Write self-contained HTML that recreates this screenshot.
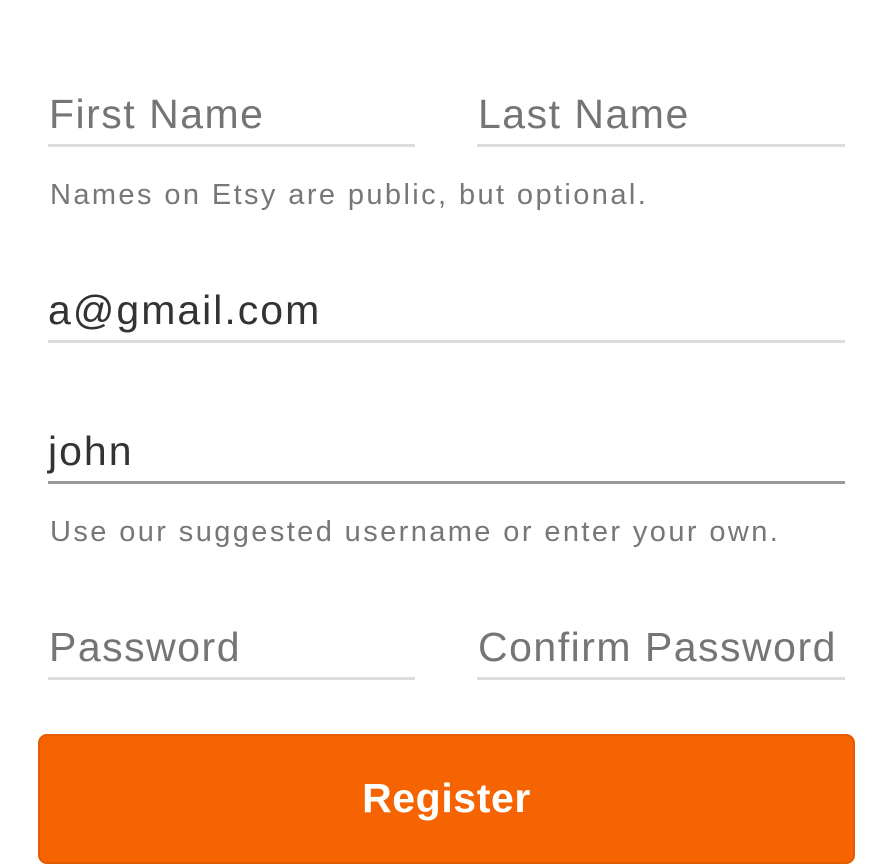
<!DOCTYPE html>
<html><head><style>
body{margin:0;width:893px;height:866px;background:#fff;position:relative;overflow:hidden;font-family:"Liberation Sans",sans-serif}
.t{position:absolute;white-space:nowrap;line-height:1}
.p{font-size:41px;color:#757575;letter-spacing:1.5px}
.v{font-size:41px;color:#333;letter-spacing:2px}
.h{font-size:29px;color:#777;letter-spacing:2.4px}
.l{position:absolute;height:3px;background:#ddd}
.btn{position:absolute;left:38px;top:734px;width:813px;height:126px;background:#f56400;border:2px solid #e35c00;border-radius:9px}
.btn span{position:absolute;left:0;right:0;top:39px;text-align:center;color:#fff;font-size:41px;font-weight:bold;letter-spacing:0.6px}
</style></head><body>
<div class="t p" style="left:49px;top:94px">First Name</div>
<div class="t p" style="left:478px;top:94px">Last Name</div>
<div class="l" style="left:48px;top:144px;width:367px"></div>
<div class="l" style="left:477px;top:144px;width:368px"></div>
<div class="t h" style="left:50px;top:181px">Names on Etsy are public, but optional.</div>
<div class="t v" style="left:48px;top:290px">a@gmail.com</div>
<div class="l" style="left:48px;top:340px;width:797px"></div>
<div class="t v" style="left:48px;top:431px">john</div>
<div class="l" style="left:48px;top:481px;width:797px;background:#999"></div>
<div class="t h" style="left:50px;top:518px">Use our suggested username or enter your own.</div>
<div class="t p" style="left:49px;top:627px">Password</div>
<div class="t p" style="left:478px;top:627px">Confirm Password</div>
<div class="l" style="left:48px;top:677px;width:367px"></div>
<div class="l" style="left:477px;top:677px;width:368px"></div>
<div class="btn"><span>Register</span></div>
</body></html>
